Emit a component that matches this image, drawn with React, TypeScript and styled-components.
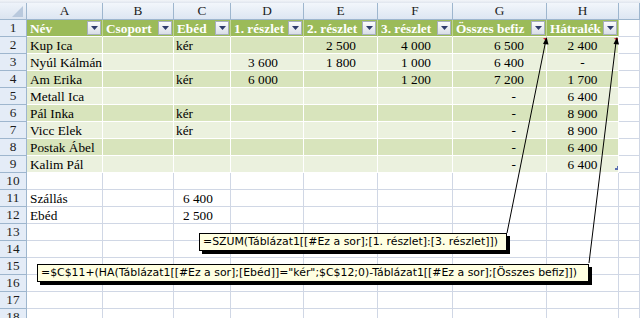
import React, {Fragment} from "react";
import styled, {createGlobalStyle} from "styled-components";

const GlobalStyle = createGlobalStyle`
  html, body {
    margin: 0;
    padding: 0;
    background: #ffffff;
  }
`;

const COLS = [76, 71, 57, 73, 74, 75, 94, 72];
const LETTERS = ["A", "B", "C", "D", "E", "F", "G", "H", ""];
const HEADERS = ["Név", "Csoport", "Ebéd", "1. részlet", "2. részlet", "3. részlet", "Összes befiz", "Hátralék"];

// one entry per table row (2..9), columns A..H
const TABLE: string[][] = [
    ["Kup Ica", "", "kér", "", "2 500", "4 000", "6 500", "2 400"],
    ["Nyúl Kálmán", "", "", "3 600", "1 800", "1 000", "6 400", "-"],
    ["Am Erika", "", "kér", "6 000", "", "1 200", "7 200", "1 700"],
    ["Metall Ica", "", "", "", "", "", "-", "6 400"],
    ["Pál Inka", "", "kér", "", "", "", "-", "8 900"],
    ["Vicc Elek", "", "kér", "", "", "", "-", "8 900"],
    ["Postak Ábel", "", "", "", "", "", "-", "6 400"],
    ["Kalim Pál", "", "", "", "", "", "-", "6 400"],
];

const EXTRA: Record<number, string[]> = {
    11: ["Szállás", "", "6 400"],
    12: ["Ebéd", "", "2 500"],
};

type Align = "left" | "right" | "center";

// how each column places its numbers
const NUM_FORMAT: {align: Align; pad: number; dashPad?: number}[] = [
    {align: "left", pad: 3},
    {align: "left", pad: 3},
    {align: "left", pad: 9},
    {align: "right", pad: 25},
    {align: "right", pad: 21},
    {align: "right", pad: 21},
    {align: "right", pad: 22, dashPad: 30},
    {align: "center", pad: 0},
];

const isNumber = (s: string) => /^[\d -]+$/.test(s);

export default function App() {
    const rows = [];
    for (let r = 1; r <= 18; r++) {
        rows.push(r);
    }

    const renderCell = (r: number, c: number) => {
        if (r === 1) {
            return (
                <HeadCell key={c}>
                    <HeadLabel>{HEADERS[c]}</HeadLabel>
                    <FilterButton>
                        <svg width="7" height="4" viewBox="0 0 7 4"><path d="M0 0h7L3.5 4z" fill="#2f3d6b" /></svg>
                    </FilterButton>
                </HeadCell>
            );
        }
        const inTable = r >= 2 && r <= 9;
        const value = inTable ? TABLE[r - 2][c] : (EXTRA[r]?.[c] ?? "");
        const tone = inTable ? (r % 2 === 0 ? "dark" : "light") : "plain";
        let align: Align = "left";
        let pad = c === 2 ? 2 : 3;
        if (value && isNumber(value)) {
            const f = NUM_FORMAT[c];
            align = f.align;
            pad = value === "-" && f.dashPad ? f.dashPad : f.pad;
        }
        return (
            <Cell key={c} $tone={tone} $align={align} $pad={pad}>
                {value}
            </Cell>
        );
    };

    return (
        <Fragment>
            <GlobalStyle />
            <Window>
                <TopStrip />
                <Sheet>
                    <Corner>
                        <svg width="11" height="11" viewBox="0 0 11 11"><path d="M11 0v11H0z" fill="#b9c9dd" /></svg>
                    </Corner>
                    {LETTERS.map((l, i) => (
                        <ColHead key={l + i}>{l}</ColHead>
                    ))}
                    {rows.map(r => (
                        <Fragment key={r}>
                            <RowHead>{r}</RowHead>
                            {COLS.map((_, c) => renderCell(r, c))}
                            <Cell $tone="plain" $align="left" $pad={0} />
                        </Fragment>
                    ))}
                </Sheet>
                <Connectors width="640" height="318" viewBox="0 0 640 318">
                    <path d="M543 38h4v4z" fill="#d8203a" />
                    <path d="M614 38h4v4z" fill="#d8203a" />
                    <line x1="507" y1="233" x2="545.5" y2="42" stroke="#000" strokeWidth="1" />
                    <path d="M546.5 37 L543 44 L548.5 44.5 z" fill="#000" />
                    <line x1="589" y1="263" x2="616" y2="42" stroke="#000" strokeWidth="1" />
                    <path d="M617 37 L613.5 44 L619 44.5 z" fill="#000" />
                    <rect x="615" y="168" width="3" height="2" fill="#5a6fb0" />
                    <rect x="617" y="166" width="1" height="2" fill="#5a6fb0" />
                </Connectors>
                <Comment $left={199} $top={233} $width={308}>
                    =SZUM(Táblázat1[[#Ez a sor];[1. részlet]:[3. részlet]])
                </Comment>
                <Comment $left={37} $top={264} $width={552}>
                    =$C$11+(HA(Táblázat1[[#Ez a sor];[Ebéd]]="kér";$C$12;0)-Táblázat1[[#Ez a sor];[Összes befiz]])
                </Comment>
            </Window>
        </Fragment>
    );
}

const Window = styled.div`
  position: relative;
  width: 640px;
  height: 318px;
  overflow: hidden;
  background: #ffffff;
`;

const TopStrip = styled.div`
  height: 3px;
  background: linear-gradient(#f3f5f9, #dfe5ee);
`;

const Sheet = styled.div`
  display: grid;
  grid-template-columns: 27px ${COLS.map(w => w + "px").join(" ")} 1fr;
  grid-auto-rows: 17px;
  font-family: "Liberation Serif", "Times New Roman", serif;
  font-size: 13.3px;
  color: #000000;
`;

const Corner = styled.div`
  box-sizing: border-box;
  display: flex;
  align-items: flex-end;
  justify-content: flex-end;
  padding: 0 3px 2px 0;
  background: linear-gradient(#eef3fa, #dbe4f0);
  border-right: 1px solid #9eb6ce;
  border-bottom: 1px solid #9eb6ce;
`;

const ColHead = styled.div`
  box-sizing: border-box;
  display: flex;
  align-items: center;
  justify-content: center;
  background: linear-gradient(#f2f6fb, #dde6f2);
  border-right: 1px solid #9eb6ce;
  border-bottom: 1px solid #9eb6ce;
  color: #1c1c1c;
  font-size: 13.3px;
  line-height: 16px;
`;

const RowHead = styled.div`
  box-sizing: border-box;
  display: flex;
  align-items: center;
  justify-content: center;
  background: #e4ecf7;
  border-right: 1px solid #9eb6ce;
  border-bottom: 1px solid #9eb6ce;
  color: #1c1c1c;
  line-height: 16px;
`;

const TONES = {
    dark: {bg: "#d8e4bc", line: "#ffffff"},
    light: {bg: "#ebf1de", line: "#ffffff"},
    plain: {bg: "#ffffff", line: "#d0d7e5"},
};

const Cell = styled.div<{$tone: keyof typeof TONES; $align: Align; $pad: number}>`
  box-sizing: border-box;
  background: ${p => TONES[p.$tone].bg};
  border-right: 1px solid ${p => TONES[p.$tone].line};
  border-bottom: 1px solid ${p => TONES[p.$tone].line};
  text-align: ${p => p.$align};
  padding: 0 ${p => (p.$align === "right" ? p.$pad : 0)}px 0 ${p => (p.$align === "left" ? p.$pad : 0)}px;
  line-height: 17px;
  white-space: nowrap;
  overflow: hidden;
`;

const HeadCell = styled.div`
  box-sizing: border-box;
  display: flex;
  align-items: flex-start;
  background: #9bbb59;
  border-right: 1px solid #c3d69b;
  border-bottom: 1px solid #ffffff;
  padding-left: 3px;
  color: #ffffff;
  font-weight: 700;
  overflow: hidden;
`;

const HeadLabel = styled.div`
  flex: 1;
  min-width: 0;
  white-space: nowrap;
  overflow: hidden;
  line-height: 17px;
`;

const FilterButton = styled.div`
  flex: none;
  box-sizing: border-box;
  width: 14px;
  height: 14px;
  margin: 1px 1px 0 0;
  display: flex;
  align-items: center;
  justify-content: center;
  background: linear-gradient(#fbfcfd, #d9dee7);
  border: 1px solid #a7afbf;
`;

const Connectors = styled.svg`
  position: absolute;
  left: 0;
  top: 0;
  pointer-events: none;
`;

const Comment = styled.div<{$left: number; $top: number; $width: number}>`
  position: absolute;
  left: ${p => p.$left}px;
  top: ${p => p.$top}px;
  width: ${p => p.$width}px;
  height: 18px;
  box-sizing: border-box;
  border: 1px solid #000000;
  background: #ffffe1;
  box-shadow: 3px 3px 0 #000000;
  padding-left: 3px;
  font-family: "DejaVu Sans", Tahoma, sans-serif;
  font-size: 10.9px;
  line-height: 16px;
  color: #000000;
  white-space: nowrap;
  overflow: hidden;
`;
